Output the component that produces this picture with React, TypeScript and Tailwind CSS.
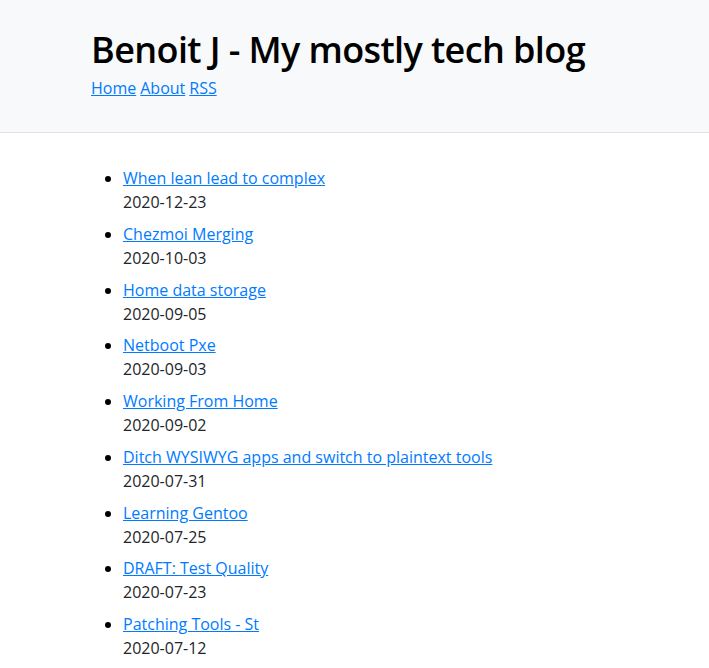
import React from 'react';

const posts = [
  { title: 'When lean lead to complex', date: '2020-12-23' },
  { title: 'Chezmoi Merging', date: '2020-10-03' },
  { title: 'Home data storage', date: '2020-09-05' },
  { title: 'Netboot Pxe', date: '2020-09-03' },
  { title: 'Working From Home', date: '2020-09-02' },
  { title: 'Ditch WYSIWYG apps and switch to plaintext tools', date: '2020-07-31' },
  { title: 'Learning Gentoo', date: '2020-07-25' },
  { title: 'DRAFT: Test Quality', date: '2020-07-23' },
  { title: 'Patching Tools - St', date: '2020-07-12' },
  { title: 'Gentoo Tips', date: '2020-07-05' },
];

const App: React.FC = () => {
  return (
    <div className="min-h-screen bg-white text-[#212529] font-['Open_Sans',sans-serif] text-base leading-6">
      {/* Header */}
      <header className="bg-[#f8f9fa] border-b border-[#e2e3e8] pt-[26px] pb-[32px] pl-[91px]">
        <h1 className="text-[36px] leading-[48px] font-semibold tracking-[-0.6px] text-black">Benoit J - My mostly tech blog</h1>
        <nav className="flex gap-1 mt-[2px]">
          <a href="#" className="text-[#007bff] underline">Home</a>
          <a href="#" className="text-[#007bff] underline">About</a>
          <a href="#" className="text-[#007bff] underline">RSS</a>
        </nav>
      </header>

      {/* Posts */}
      <ul className="list-disc pl-[123px] mt-[33px] marker:text-black">
        {posts.map((p) => (
          <li key={p.date + p.title} className="mb-[7.75px]">
            <a href="#" className="text-[#007bff] underline">{p.title}</a>
            <div>{p.date}</div>
          </li>
        ))}
      </ul>
    </div>
  );
};

export default App;
